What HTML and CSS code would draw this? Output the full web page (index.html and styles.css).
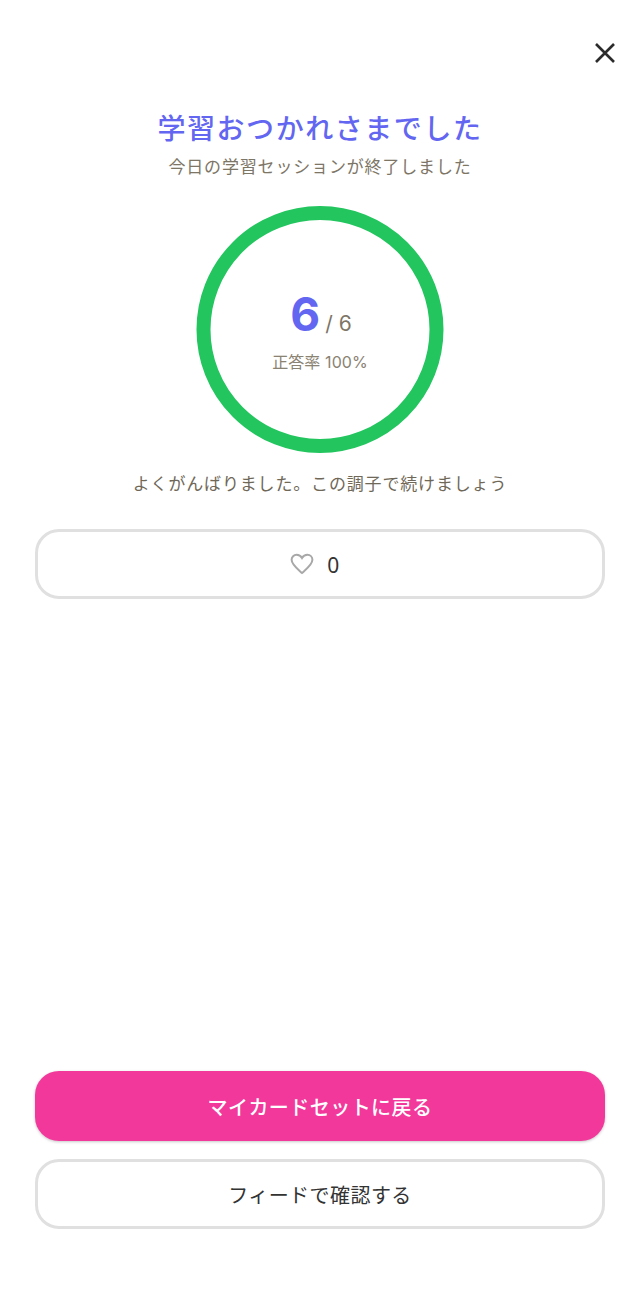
FILE: index.html
```html
<!DOCTYPE html>
<html lang="ja">
<head>
  <meta charset="utf-8">
  <title>学習おつかれさまでした</title>
  <link rel="stylesheet" href="styles.css">
</head>
<body>
<div class="page">
  <div class="top">
    <button class="close" aria-label="閉じる">
      <svg width="24" height="24" viewBox="0 0 24 24"><path d="M3 3L21 21M21 3L3 21"/></svg>
    </button>
  </div>

  <h1 class="title">学習おつかれさまでした</h1>
  <p class="sub">今日の学習セッションが終了しました</p>

  <div class="ring">
    <svg class="ring-svg" width="248" height="248" viewBox="0 0 248 248"><circle cx="124" cy="123.500" r="116.500"/></svg>
    <div class="score"><span class="num">6</span><span class="total">/ 6</span></div>
    <div class="rate">正答率 100%</div>
  </div>

  <p class="msg">よくがんばりました。この調子で続けましょう</p>

  <button class="btn btn-line like">
    <svg class="heart" width="24" height="24" viewBox="0 0 24 24"><path d="M12 21C7 16.600 1.600 12.600 1.600 7.800C1.600 4.800 3.900 2.800 6.600 2.800C8.800 2.800 10.800 4 12 6C13.200 4 15.200 2.800 17.400 2.800C20.100 2.800 22.400 4.800 22.400 7.800C22.400 12.600 17 16.600 12 21Z"/></svg>
    <span class="like-count">0</span>
  </button>

  <div class="actions">
    <button class="btn btn-main">マイカードセットに戻る</button>
    <button class="btn btn-line">フィードで確認する</button>
  </div>
</div>
</body>
</html>
```

FILE: styles.css
```css
* { box-sizing: border-box; }

body {
  margin: 0;
  background: #fff;
  font-family: Inter, "Noto Sans CJK JP", sans-serif;
}

.page {
  min-height: 1313px;
  padding: 0 35px 84px;
  display: flex;
  flex-direction: column;
  align-items: center;
}

.top {
  width: 100%;
  height: 107px;
  padding-top: 41px;
  display: flex;
  justify-content: flex-end;
}

.close {
  width: 24px;
  height: 24px;
  margin-right: -12px;
  padding: 0;
  border: none;
  background: none;
}

.close path {
  fill: none;
  stroke: #2b2b2b;
  stroke-width: 2.6;
}

.title {
  margin: 0;
  height: 44px;
  font-size: 28px;
  line-height: 44px;
  font-weight: 500;
  letter-spacing: 1.55px;
  color: #6366f1;
}

.sub {
  margin: 3px 0 0;
  height: 26px;
  font-size: 17px;
  line-height: 26px;
  letter-spacing: 0.83px;
  color: #7d7566;
}

.ring {
  position: relative;
  width: 248px;
  height: 248px;
  margin-top: 26px;
  display: flex;
  flex-direction: column;
  align-items: center;
  justify-content: center;
}

.ring-svg {
  position: absolute;
  top: 0;
  left: 0;
}

.ring-svg circle {
  fill: none;
  stroke: #22c55e;
  stroke-width: 14;
}

.score {
  display: flex;
  align-items: baseline;
  gap: 5px;
  height: 64px;
  padding-left: 2px;
  line-height: 64px;
  margin-top: -5px;
}

.num {
  font-size: 46px;
  font-weight: 700;
  color: #6366f1;
}

.total {
  font-size: 21px;
  color: #7d7566;
}

.rate {
  margin-top: 4px;
  font-size: 16px;
  line-height: 24px;
  letter-spacing: 0.1px;
  color: #8a8272;
}

.msg {
  margin: 16px 0 0;
  height: 28px;
  font-size: 17px;
  line-height: 28px;
  letter-spacing: 0.83px;
  color: #6f6858;
}

.btn {
  display: flex;
  align-items: center;
  justify-content: center;
  width: 570px;
  height: 70px;
  padding: 0;
  border-radius: 24px;
  font-family: inherit;
  font-size: 20px;
  letter-spacing: 0.45px;
}

.btn-line {
  border: 3px solid #e0e0e0;
  background: #fff;
  color: #333;
}

.btn-main {
  border: none;
  background: #f3389b;
  color: #fff;
  font-weight: 500;
  box-shadow: 0 1px 3px rgba(0, 0, 0, 0.22);
}

.like {
  margin-top: 31px;
  padding-right: 10px;
  gap: 13px;
}

.like-count {
  padding-top: 2px;
  font-family: "Noto Sans", sans-serif;
  font-size: 21px;
}

.heart path {
  fill: none;
  stroke: #a8a8a8;
  stroke-width: 2;
}

.actions {
  margin-top: auto;
  display: flex;
  flex-direction: column;
  gap: 18px;
}
```
